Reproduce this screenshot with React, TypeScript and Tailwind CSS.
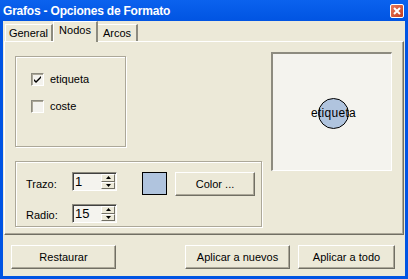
import React from 'react';

const font = { fontFamily: '"Liberation Sans", Arial, sans-serif' };

function Tab({ label, selected, className }: { label: string; selected?: boolean; className: string }) {
  return (
    <div
      className={`flex items-center justify-center border-t border-l border-white text-[11px] text-black ${
        selected
          ? 'h-[21px] -mb-[1px] z-10 bg-[#ECE9D8] border-r-2 border-r-[#8D8B7F] pb-[3px]'
          : 'h-[17px] bg-[#ECE9D8] border-r-2 border-r-[#8D8B7F] pt-[1px]'
      } ${className}`}
    >
      {label}
    </div>
  );
}

function Checkbox({ checked, label }: { checked?: boolean; label: string }) {
  return (
    <div className="flex items-center gap-[6px] h-[13px]">
      <div className="w-[13px] h-[13px] bg-[#F4F3EE] border-t border-l border-[#8D8B7F] border-r border-b border-r-white border-b-white shadow-[inset_1px_1px_0_#ACA899] flex items-center justify-center">
        {checked && (
          <svg width="9" height="9" viewBox="0 0 9 9">
            <path d="M1 4 L3 6 L8 1 L8 3 L3 8 L1 6 Z" fill="black" />
          </svg>
        )}
      </div>
      <span className="text-[11px] text-black leading-none">{label}</span>
    </div>
  );
}

function Spin({ value }: { value: string }) {
  return (
    <div className="w-[45px] h-[19px] flex bg-[#F4F3EE] border-t border-l border-[#8D8B7F] border-r border-b border-r-white border-b-white shadow-[inset_1px_1px_0_#404040]">
      <div className="flex-1 pl-[2px] pt-[1px] text-[13px] leading-[16px] text-black">{value}</div>
      <div className="w-[15px] flex flex-col py-[1px] pr-[1px]">
        {[0, 1].map((i) => (
          <div
            key={i}
            className="flex-1 flex items-center justify-center bg-[#ECE9D8] border-t border-l border-white border-r border-b border-r-[#716F64] border-b-[#716F64]"
          >
            <svg width="5" height="3" viewBox="0 0 5 3">
              {i === 0 ? <path d="M2.5 0 L5 3 L0 3 Z" fill="black" /> : <path d="M0 0 L5 0 L2.5 3 Z" fill="black" />}
            </svg>
          </div>
        ))}
      </div>
    </div>
  );
}

function Button({ label, className }: { label: string; className: string }) {
  return (
    <div
      className={`h-[24px] flex items-center justify-center bg-[#ECE9D8] border-t border-l border-white border-r border-b border-r-[#716F64] border-b-[#716F64] shadow-[inset_-1px_-1px_0_#ACA899] text-[11px] text-black ${className}`}
    >
      {label}
    </div>
  );
}

export default function App() {
  return (
    <div className="w-[408px] h-[279px] flex flex-col bg-[#0054E3]" style={font}>
      {/* Title bar */}
      <div className="h-[21px] shrink-0 flex items-center justify-between pl-[3px] pr-[4px] bg-gradient-to-b from-[#0B62EE] to-[#0154E2]">
        <span className="text-white font-bold text-[12px] leading-none tracking-[-0.2px]">Grafos - Opciones de Formato</span>
        <div className="w-[14px] h-[14px] rounded-[2px] border border-white bg-gradient-to-br from-[#E9785A] to-[#C53C1C] flex items-center justify-center">
          <svg width="8" height="8" viewBox="0 0 8 8">
            <path d="M1 1 L7 7 M7 1 L1 7" stroke="white" strokeWidth="2" />
          </svg>
        </div>
      </div>

      {/* Client */}
      <div className="flex-1 mx-[3px] mb-[3px] bg-[#ECE9D8] flex flex-col">
        {/* Tabs */}
        <div className="h-[20px] shrink-0 flex items-end pl-[2px]">
          <Tab label="General" className="w-[48px]" />
          <Tab label="Nodos" selected className="w-[45px]" />
          <Tab label="Arcos" className="w-[40px] border-l-0" />
        </div>

        {/* Panel */}
        <div className="h-[194px] shrink-0 mx-[1px] border-t border-l border-white border-r border-b border-r-[#716F64] border-b-[#716F64] shadow-[inset_-1px_-1px_0_#ACA899] flex items-start pl-[10px]">
          <div className="flex flex-col gap-[14px] pt-[14px] w-[247px]">
            <div className="w-[111px] h-[91px] border border-[#ACA899] shadow-[1px_1px_0_white,inset_1px_1px_0_white] flex flex-col gap-[14px] pl-[15px] pt-[16px]">
              <Checkbox checked label="etiqueta" />
              <Checkbox label="coste" />
            </div>
            <div className="w-[247px] h-[66px] border border-[#ACA899] shadow-[1px_1px_0_white,inset_1px_1px_0_white] flex flex-col gap-[12px] pl-[10px] pt-[10px]">
              <div className="flex items-start">
                <span className="w-[46px] text-[11px] text-black pt-[4px]">Trazo:</span>
                <Spin value="1" />
                <div className="ml-[25px] w-[25px] h-[23px] bg-[#B0C4DE] border border-black" />
                <Button label="Color ..." className="ml-[8px] w-[80px]" />
              </div>
              <div className="flex items-start -mt-[4px]">
                <span className="w-[46px] text-[11px] text-black pt-[3px]">Radio:</span>
                <Spin value="15" />
              </div>
            </div>
          </div>
          <div className="mt-[10px] ml-[9px] w-[121px] h-[119px] bg-[#F4F3EE] border-t-2 border-l-2 border-t-[#8D8B7F] border-l-[#8D8B7F] border-r border-b border-r-white border-b-white flex items-center justify-center pl-[3px] pt-[2px]">
            <div className="relative w-[31px] h-[31px] rounded-full bg-[#B0C4DE] border border-black flex items-center justify-center">
              <span className="absolute text-[12px] text-black leading-none tracking-[0.3px]">etiqueta</span>
            </div>
          </div>
        </div>

        {/* Buttons */}
        <div className="flex-1 flex items-start justify-between pt-[10px] pl-[8px] pr-[10px]">
          <Button label="Restaurar" className="w-[105px]" />
          <div className="flex gap-[8px]">
            <Button label="Aplicar a nuevos" className="w-[105px]" />
            <Button label="Aplicar a todo" className="w-[97px]" />
          </div>
        </div>
      </div>
    </div>
  );
}
